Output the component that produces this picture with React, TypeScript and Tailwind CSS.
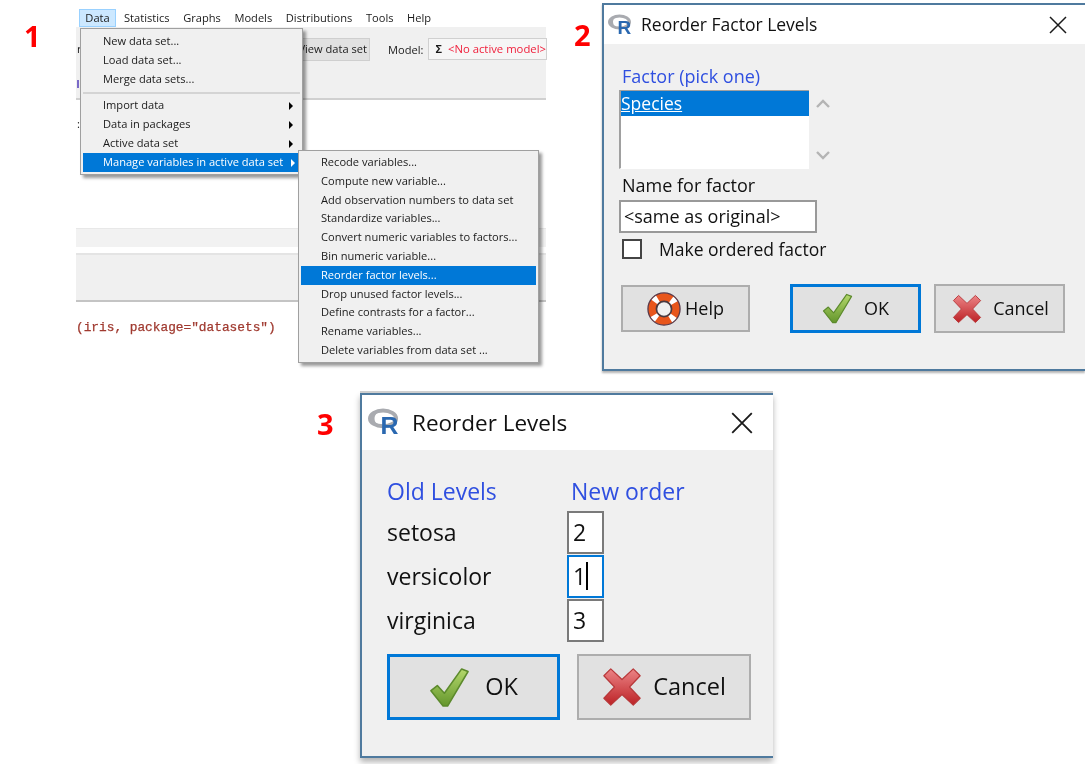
const sans = "font-['Open_Sans','Noto_Sans',sans-serif]";

const RLogo = ({ width }: { width: number }) => (
  <svg width={width} height={(width * 28) / 26} viewBox="0 -3 26 28" className="shrink-0">
    <ellipse cx="11.5" cy="8" rx="10" ry="6" fill="none" stroke="#a9abb0" strokeWidth="3" />
    <path d="M1.5 8C1.5 3 7 1 12 1 8 2 5 5 5 8s2 5 5 6C5 14 1.5 12 1.5 8Z" fill="#a9abb0" />
    <text x="9.5" y="20" fontFamily="Liberation Sans" fontWeight="700" fontSize="19" fill="#2a68b0">
      R
    </text>
  </svg>
);

const CloseIcon = ({ size }: { size: number }) => (
  <svg width={size} height={size} viewBox="0 0 18 18" stroke="#1a1a1a" strokeWidth="1.5">
    <path d="M1 1 17 17M17 1 1 17" />
  </svg>
);

const CheckIcon = ({ size }: { size: number }) => (
  <svg width={size} height={size} viewBox="0 0 32 32">
    <defs>
      <linearGradient id="chk" x1="0" y1="0" x2="0" y2="1">
        <stop offset="0" stopColor="#b4d86c" />
        <stop offset="1" stopColor="#64962c" />
      </linearGradient>
    </defs>
    <path
      d="M1.5 18.5 6.5 14.5 12 20.5 25.5 1.5 30.5 3.5 14.5 30.5 11 30.5Z"
      fill="url(#chk)"
      stroke="#5c8a2c"
      strokeWidth="1.2"
      strokeLinejoin="round"
    />
  </svg>
);

const CrossIcon = ({ size }: { size: number }) => (
  <svg width={size} height={size} viewBox="0 0 32 32">
    <defs>
      <linearGradient id="crs" x1="0" y1="0" x2="0" y2="1">
        <stop offset="0" stopColor="#ec8486" />
        <stop offset="1" stopColor="#bc2226" />
      </linearGradient>
    </defs>
    <path
      d="M7 1.5 16 10 25 1.5 30.5 7 22 16 30.5 25 25 30.5 16 22 7 30.5 1.5 25 10 16 1.5 7Z"
      fill="url(#crs)"
      stroke="#b8383a"
      strokeWidth="1"
      strokeLinejoin="round"
    />
  </svg>
);

const HelpIcon = ({ size }: { size: number }) => (
  <svg width={size} height={size} viewBox="0 0 36 36">
    <circle cx="18" cy="18" r="12.5" fill="none" stroke="#e8561c" strokeWidth="9" />
    <circle cx="18" cy="18" r="12.5" fill="none" stroke="#fff" strokeWidth="9" strokeDasharray="5 14.63" strokeDashoffset="12" />
    <circle cx="18" cy="18" r="17" fill="none" stroke="#5a3a4a" strokeWidth="1.4" />
    <circle cx="18" cy="18" r="8" fill="#f0f0f0" stroke="#4a3a40" strokeWidth="1.8" />
  </svg>
);

const Arrow = () => (
  <span className="ml-auto h-0 w-0 border-y-[4px] border-l-[4px] border-y-transparent border-l-black" />
);

const mainItems = ["New data set...", "Load data set...", "Merge data sets..."];
const subMenus = ["Import data", "Data in packages", "Active data set"];
const manageItems = [
  "Recode variables...",
  "Compute new variable...",
  "Add observation numbers to data set",
  "Standardize variables...",
  "Convert numeric variables to factors...",
  "Bin numeric variable...",
  "Reorder factor levels...",
  "Drop unused factor levels...",
  "Define contrasts for a factor...",
  "Rename variables...",
  "Delete variables from data set ...",
];
const menuBar = ["Statistics", "Graphs", "Models", "Distributions", "Tools", "Help"];

const MenuPanel = () => (
  <div className={`absolute left-[76px] top-[9px] h-[360px] w-[470px] text-[11.1px] text-[#1a1a1a] ${sans}`}>
    <div className="flex h-[18px] items-center gap-[13.6px]">
      <span className="ml-[3px] mr-[-5.6px] flex h-[18px] w-[37px] items-center justify-center border border-[#99d1ff] bg-[#cce8ff]">Data</span>
      {menuBar.map((m) => (
        <span key={m}>{m}</span>
      ))}
    </div>
    <div className="relative flex h-[73px] items-start border-b-2 border-[#d0d0d0] bg-[#f0f0f0] pl-[226px] pt-[11px]">
      <span className="absolute left-[1px] top-[14px]">r</span>
      <span className="absolute left-[1px] top-[53px] h-[8px] w-[2px] bg-[#7a6ac8]" />
      <div className="flex h-[23px] w-[68px] shrink-0 items-center justify-end whitespace-nowrap border border-[#cfcfcf] bg-[#e1e1e1] pr-[2px]">View data set</div>
      <span className="ml-[18px] mt-[4px]">Model:</span>
      <div className="ml-[5px] flex h-[22px] flex-1 items-center whitespace-nowrap border border-[#d0d0d0] bg-[#f6f6f6] pl-[6px]">
        <span className="mr-[6px] font-bold">Σ</span>
        <span className="text-[11.3px] text-[#f0203c]">&lt;No active model&gt;</span>
      </div>
    </div>
    <span className="absolute left-[1px] top-[107px]">:</span>
    <div className="mt-[128px] h-[19px] border-t border-[#e8e8e8] bg-[#f2f2f2]" />
    <div className="mt-[6px] h-[49px] border-y-2 border-t-[#e4e4e4] border-b-[#c4c4c4] bg-[#f0f0f0]" />
    <p className="mt-[19px] whitespace-pre font-['Liberation_Mono',monospace] text-[12.8px] leading-[14px] text-[#a03a30] [-webkit-text-stroke:0.25px_#a03a30]">(iris, package="datasets")</p>

    <div className="absolute left-[4px] top-[19px] z-10 w-[223px] border border-[#a0a0a0] bg-[#f0f0f0] p-[2px] pt-[3px] shadow-[3px_3px_3px_rgba(0,0,0,0.4)]">
      {mainItems.map((m) => (
        <div key={m} className="flex h-[19px] items-center pl-[20px]">{m}</div>
      ))}
      <div className="my-[2.5px] h-0.5 bg-[#d4d4d4]" />
      {subMenus.map((m) => (
        <div key={m} className="flex h-[19px] items-center pl-[20px] pr-[7px]">
          {m}
          <Arrow />
        </div>
      ))}
      <div className="flex h-[19px] items-center whitespace-nowrap bg-[#0078d7] pl-[20px] pr-[5px] text-white">
        Manage variables in active data set
        <span className="ml-auto h-0 w-0 border-y-[4px] border-l-[4px] border-y-transparent border-l-white" />
      </div>
    </div>

    <div className="absolute left-[222px] top-[141px] z-20 w-[241px] border border-[#a0a0a0] bg-[#f0f0f0] p-[2px] shadow-[3px_3px_3px_rgba(0,0,0,0.4)]">
      {manageItems.map((m) => (
        <div key={m} className={`flex h-[18.8px] items-center pl-[20px] ${m.startsWith("Reorder") ? "bg-[#0078d7] text-white" : ""}`}>
          {m}
        </div>
      ))}
    </div>
  </div>
);

const Button = ({ className, children }: { className: string; children: React.ReactNode }) => (
  <div className={`flex items-center justify-center bg-[#e1e1e1] ${className}`}>{children}</div>
);

const FactorDialog = () => (
  <div className={`absolute left-[602px] top-[3px] flex h-[368px] w-[483px] flex-col border-2 border-r-0 border-[#4f7a9e] bg-[#f0f0f0] text-[18px] text-[#111] shadow-[0_2px_2px_rgba(0,0,0,0.3)] ${sans}`}>
    <div className="flex h-[39px] items-center bg-white pl-[4px] pr-[18px] text-[17.5px]">
      <RLogo width={26} />
      <span className="ml-[7px]">Reorder Factor Levels</span>
      <span className="ml-auto"><CloseIcon size={18} /></span>
    </div>
    <div className="flex flex-1 flex-col pl-[15px]">
      <p className="ml-[3px] mt-[19px] h-[27px] leading-[27px] text-[#2f4fe0]">Factor (pick one)</p>
      <div className="flex items-center">
        <div className="h-[79px] w-[190px] border-y border-l-2 border-[#a0a0a0] border-b-white border-r-white bg-white">
          <div className="flex h-[25px] items-center bg-[#0078d7] text-[17.5px] text-white underline">Species</div>
        </div>
        <div className="ml-[7px] flex h-[79px] flex-col justify-between py-[9px] text-[#b4b4b4]">
          <svg width="14" height="9" viewBox="0 0 14 9" fill="none" stroke="currentColor" strokeWidth="2.4"><path d="M1 8 7 2 13 8" /></svg>
          <svg width="14" height="9" viewBox="0 0 14 9" fill="none" stroke="currentColor" strokeWidth="2.4"><path d="M1 1 7 7 13 1" /></svg>
        </div>
      </div>
      <p className="ml-[3px] mt-[3px] h-[28px] leading-[27px]">Name for factor</p>
      <div className="flex h-[33px] w-[198px] items-center border-2 border-[#999] bg-white pl-[3px]">&lt;same as original&gt;</div>
      <div className="ml-[3px] mt-[6px] flex items-center">
        <span className="h-[20px] w-[20px] border-2 border-[#444] bg-white" />
        <span className="ml-[17px] text-[17.5px] leading-[20px]">Make ordered factor</span>
      </div>
      <div className="ml-[2px] mt-[25px] flex items-center">
        <Button className="h-[47px] w-[129px] gap-[4px] border-2 border-[#adadad]">
          <HelpIcon size={34} />
          Help
        </Button>
        <Button className="ml-[40px] h-[49px] w-[131px] gap-[11px] border-[3px] border-[#0078d7]">
          <CheckIcon size={31} />
          OK
        </Button>
        <Button className="ml-[13px] h-[49px] w-[131px] gap-[11px] border-2 border-[#adadad] pl-[2px]">
          <CrossIcon size={30} />
          Cancel
        </Button>
      </div>
    </div>
  </div>
);

const levels = [
  { name: "setosa", value: "2" },
  { name: "versicolor", value: "1", focused: true },
  { name: "virginica", value: "3" },
];

const LevelsDialog = () => (
  <div className={`absolute left-[360px] top-[393px] flex h-[365px] w-[413px] flex-col border-2 border-r-0 border-[#4f7a9e] bg-[#f0f0f0] text-[23px] text-[#111] shadow-[0_-2px_0_#cfcfcf,0_4px_6px_rgba(0,0,0,0.3)] ${sans}`}>
    <div className="flex h-[55px] items-center bg-white pl-[6px] pr-[20px] text-[22.5px]">
      <RLogo width={34} />
      <span className="ml-[10px]">Reorder Levels</span>
      <span className="ml-auto"><CloseIcon size={22} /></span>
    </div>
    <div className="flex flex-1 flex-col pl-[25px]">
      <div className="mt-[24px] flex h-[36px] leading-[34px] text-[#2f4fe0]">
        <span className="w-[184px]">Old Levels</span>
        <span>New order</span>
      </div>
      {levels.map((l) => (
        <div key={l.name} className="flex h-[44px] items-center">
          <span className="w-[180px] leading-[30px]">{l.name}</span>
          <div className={`flex h-[43px] w-[37px] items-center border-2 bg-white pl-[4px] ${l.focused ? "border-[#0078d7]" : "border-[#7a7a7a]"}`}>
            {l.value}
            {l.focused && <span className="h-[28px] w-[2px] bg-black" />}
          </div>
        </div>
      ))}
      <div className="mt-[12px] flex items-center text-[23.5px]">
        <Button className="h-[66px] w-[173px] gap-[15px] border-[3px] border-[#0078d7]">
          <CheckIcon size={41} />
          OK
        </Button>
        <Button className="ml-[17px] h-[66px] w-[174px] gap-[11px] border-2 border-[#adadad]">
          <CrossIcon size={40} />
          Cancel
        </Button>
      </div>
    </div>
  </div>
);

const StepNumber = ({ className, children }: { className: string; children: React.ReactNode }) => (
  <span className={`absolute font-['Open_Sans',sans-serif] text-[29px] font-bold leading-none text-[#ff0000] ${className}`}>{children}</span>
);

export default function App() {
  return (
    <div className="relative h-[764px] w-[1085px] overflow-hidden bg-white blur-[0.3px]">
      <StepNumber className="left-[24px] top-[21px]">1</StepNumber>
      <StepNumber className="left-[574px] top-[20px]">2</StepNumber>
      <StepNumber className="left-[317px] top-[409px]">3</StepNumber>
      <MenuPanel />
      <FactorDialog />
      <LevelsDialog />
    </div>
  );
}
